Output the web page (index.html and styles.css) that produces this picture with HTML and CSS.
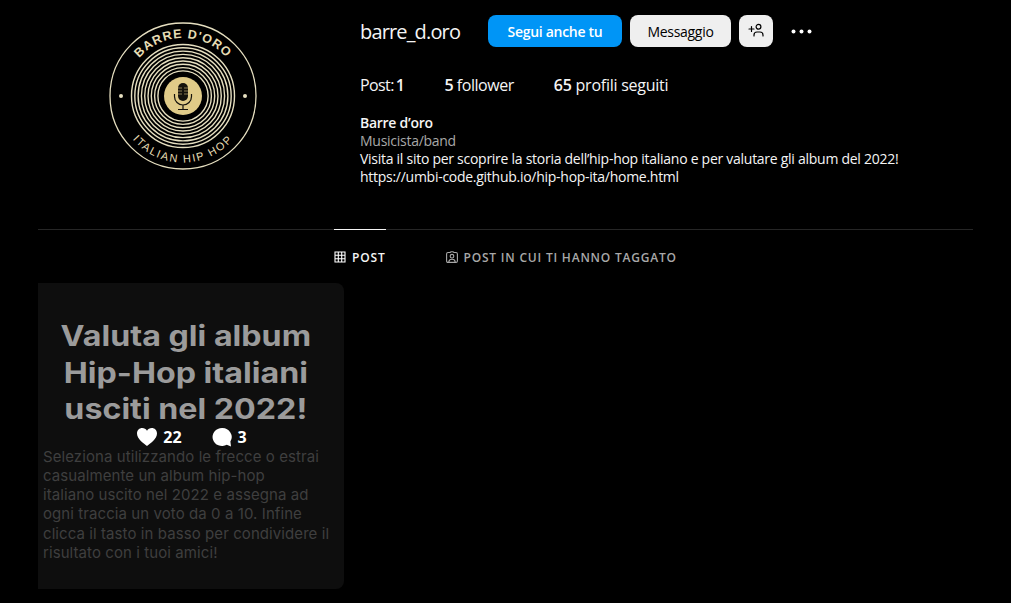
FILE: index.html
```html
<!DOCTYPE html>
<html lang="it">
<head>
  <meta charset="utf-8">
  <title>barre_d.oro</title>
  <link rel="stylesheet" href="styles.css">
</head>
<body>
<div class="page">
  <header class="profile">
    <div class="avatar-col">
      <svg class="avatar" width="148" height="148" viewBox="0 0 148 148">
        <defs>
          <path id="arc-top" d="M 16 74 A 58 58 0 0 1 132 74"/>
          <path id="arc-bottom" d="M 7.500 74 A 66.500 66.500 0 0 0 140.500 74"/>
        </defs>
        <circle class="line" cx="74" cy="74" r="73" stroke-width="1.3"/>
        <circle class="line" cx="74" cy="74" r="51.500" stroke-width="1.4"/>
        <circle class="line" cx="74" cy="74" r="48.200" stroke-width="1.4"/>
        <circle class="line" cx="74" cy="74" r="44.900" stroke-width="1.4"/>
        <circle class="line" cx="74" cy="74" r="41.600" stroke-width="1.4"/>
        <circle class="line" cx="74" cy="74" r="38.300" stroke-width="1.4"/>
        <circle class="line" cx="74" cy="74" r="35" stroke-width="1.4"/>
        <circle class="line" cx="74" cy="74" r="31.700" stroke-width="1.4"/>
        <circle class="line" cx="74" cy="74" r="28.400" stroke-width="1.4"/>
        <circle class="line" cx="74" cy="74" r="25.100" stroke-width="1.4"/>
        <circle class="label" cx="74" cy="74" r="19"/>
        <circle class="dot" cx="12" cy="74" r="2"/>
        <circle class="dot" cx="136" cy="74" r="2"/>
        <rect class="mic" x="69" y="61" width="10" height="18" rx="5"/>
        <path class="mic-line" d="M 65.500 72 V 74.500 A 8.500 8.500 0 0 0 82.500 74.500 V 72 M 74 83 V 87 M 69 87.500 H 79"/>
        <path class="mic-gap" d="M 69 66 H 73 M 69 69 H 73 M 69 72 H 73 M 75 66 H 79 M 75 69 H 79 M 75 72 H 79"/>
        <text class="logo-top"><textPath href="#arc-top" startOffset="50%">BARRE D'ORO</textPath></text>
        <text class="logo-bottom"><textPath href="#arc-bottom" startOffset="50%">ITALIAN HIP HOP</textPath></text>
      </svg>
    </div>
    <section class="info">
      <div class="top-row">
        <h2 class="username">barre_d.oro</h2>
        <button class="btn btn-blue">Segui anche tu</button>
        <button class="btn btn-grey">Messaggio</button>
        <button class="btn btn-grey btn-icon">
          <svg width="16" height="16" viewBox="0 0 16 16" fill="none" stroke="#000" stroke-width="1.200" stroke-linecap="round">
            <circle cx="10.500" cy="3.800" r="2.400"/>
            <path d="M 6 13 V 12 A 3 3 0 0 1 9 9 H 12 A 3 3 0 0 1 15 12 V 13"/>
            <path d="M 1 6 H 6 M 3.500 3.500 V 8.500"/>
          </svg>
        </button>
        <button class="more">
          <svg width="21" height="5" viewBox="0 0 21 5" fill="#fff">
            <circle cx="2.500" cy="2.500" r="2"/>
            <circle cx="10.500" cy="2.500" r="2"/>
            <circle cx="18.500" cy="2.500" r="2"/>
          </svg>
        </button>
      </div>
      <ul class="stats">
        <li class="stat-posts">Post: <b>1</b></li>
        <li class="stat-followers"><b>5</b> follower</li>
        <li><b>65</b> profili seguiti</li>
      </ul>
      <div class="bio">
        <div class="bio-name">Barre d’oro</div>
        <div class="bio-cat">Musicista/band</div>
        <div>Visita il sito per scoprire la storia dell’hip-hop italiano e per valutare gli album del 2022!</div>
        <div>https://umbi-code.github.io/hip-hop-ita/home.html</div>
      </div>
    </section>
  </header>

  <nav class="tabs">
    <a class="tab active">
      <svg width="12" height="12" viewBox="0 0 12 12" fill="none" stroke="#fff" stroke-width="1.100">
        <path d="M 1 1 H 11 V 11 H 1 Z M 4.300 1 V 11 M 7.700 1 V 11 M 1 4.300 H 11 M 1 7.700 H 11"/>
      </svg>
      POST
    </a>
    <a class="tab">
      <svg width="12" height="12" viewBox="0 0 12 12" fill="none" stroke="#a8a8a8" stroke-width="1.100">
        <path d="M 4 1.500 L 5 0.700 H 7 L 8 1.500 H 10 Q 11.400 1.500 11.400 3 V 10 Q 11.400 11.400 10 11.400 H 2 Q 0.600 11.400 0.600 10 V 3 Q 0.600 1.500 2 1.500 Z"/>
        <circle cx="6" cy="5.200" r="1.800"/>
        <path d="M 2.800 11 Q 3 8.300 6 8.300 Q 9 8.300 9.200 11"/>
      </svg>
      POST IN CUI TI HANNO TAGGATO
    </a>
  </nav>

  <main class="grid">
    <article class="tile">
      <h1 class="tile-title">Valuta gli album<br>Hip-Hop italiani<br>usciti nel 2022!</h1>
      <p class="tile-text">Seleziona utilizzando le frecce o estrai<br>casualmente un album hip-hop<br>italiano uscito nel 2022 e assegna ad<br>ogni traccia un voto da 0 a 10. Infine<br>clicca il tasto in basso per condividere il<br>risultato con i tuoi amici!</p>
      <div class="tile-hover">
        <span class="count">
          <svg width="20" height="18" viewBox="0 0 20 18" fill="#fff">
            <path d="M 10 18 C 7 15.500 0 11 0 5.500 C 0 2.200 2.400 0 5.200 0 C 7.300 0 9 1 10 2.800 C 11 1 12.700 0 14.800 0 C 17.600 0 20 2.200 20 5.500 C 20 11 13 15.500 10 18 Z"/>
          </svg>
          22
        </span>
        <span class="count">
          <svg width="20" height="19" viewBox="0 0 20 19" fill="#fff">
            <path d="M 10 0 A 9.500 9 0 1 0 14.800 16.800 L 19 18.500 L 18.400 13.500 A 9.500 9 0 0 0 10 0 Z"/>
          </svg>
          3
        </span>
      </div>
    </article>
  </main>
</div>
</body>
</html>
```
FILE: styles.css
```css
/* page */
* {box-sizing: border-box;}

body {
  margin: 0;
  background-color: #000;
  color: #f5f5f5;
  font-family: "Open Sans", "Noto Sans", Arial, sans-serif;
  overflow: hidden;
}

.page {
  padding: 0 38px;
}

/* profile header */
.profile {
  display: flex;
  height: 230px;
  border-bottom: 1px solid #262626;
}

.avatar-col {
  width: 322px;
  padding: 22px 32px 0 0;
  display: flex;
  justify-content: center;
  align-items: flex-start;
}

.line {
  fill: none;
  stroke: #e6dfc0;
}

.label {fill: #e0cb88;}
.dot {fill: #e6dfc0;}
.mic {fill: #14120c;}

.mic-line {
  fill: none;
  stroke: #14120c;
  stroke-width: 1.2;
}

.mic-gap {
  fill: none;
  stroke: #e0cb88;
  stroke-width: 0.6;
}

.logo-top, .logo-bottom {
  fill: #e6dcb4;
  text-anchor: middle;
  font-family: "Liberation Sans", Arial, sans-serif;
}

.logo-top {
  font-size: 12.5px;
  font-weight: bold;
  letter-spacing: 1px;
}

.logo-bottom {
  font-size: 11px;
  letter-spacing: 1.7px;
}

.info {
  flex: 1;
  padding-top: 15px;
}

.top-row {
  display: flex;
  align-items: center;
  height: 32px;
}

.username {
  margin: 0 28px 0 0;
  font-size: 20px;
  font-weight: 400;
  width: 100px;
  white-space: nowrap;
  letter-spacing: -0.85px;
}

.btn {
  height: 32px;
  border: 0;
  border-radius: 8px;
  font-family: inherit;
  font-size: 14px;
  font-weight: 600;
  margin-right: 8px;
  padding: 0;
  letter-spacing: -0.3px;
}

.btn-blue {
  width: 134px;
  background-color: #0095f6;
  color: #fff;
}

.btn-grey {
  width: 101px;
  background-color: #efefef;
  color: #000;
  font-weight: 400;
}

.btn-icon {
  width: 34px;
  display: flex;
  align-items: center;
  justify-content: center;
}

.more {
  margin-left: 10px;
  padding: 0;
  border: 0;
  background: none;
  display: flex;
}

.stats {
  display: flex;
  gap: 40px;
  margin: 26px 0 0;
  padding: 0;
  list-style: none;
  font-size: 16px;
  line-height: 24px;
  letter-spacing: -0.25px;
}

.stats b {font-weight: 600;}

.stat-posts {
  letter-spacing: -0.6px;
  word-spacing: -1.5px;
}

.stat-followers {letter-spacing: -0.45px;}

.bio {
  margin-top: 17px;
  font-size: 14px;
  line-height: 18px;
  letter-spacing: -0.27px;
  color: #f5f5f5;
}

.bio-name {font-weight: 600;}
.bio-cat {color: #a8a8a8;}

/* tabs */
.tabs {
  display: flex;
  justify-content: center;
  gap: 60px;
  height: 53px;
}

.tab {
  display: flex;
  align-items: center;
  gap: 6px;
  height: 53px;
  margin-top: -1px;
  padding-top: 2px;
  border-top: 1px solid transparent;
  color: #a8a8a8;
  font-size: 12px;
  font-weight: 600;
  letter-spacing: 0.8px;
}

.tab.active {
  border-top-color: #f5f5f5;
  color: #f5f5f5;
}

/* posts */
.tile {
  position: relative;
  width: 306px;
  height: 306px;
  background-color: #0e0e0e;
  border-radius: 0 8px 8px 0;
  font-family: Inter, "Open Sans", sans-serif;
}

.tile-title {
  margin: 0 0 19px;
  padding: 35px 9px 0 0;
  font-size: 28px;
  line-height: 36.500px;
  font-weight: 700;
  text-align: center;
  color: #9b9b9b;
  transform: scaleX(1.15);
}

.tile-text {
  margin: 0;
  padding-left: 5px;
  font-size: 15px;
  line-height: 19.300px;
  letter-spacing: 0.08px;
  color: #3f3f3f;
  white-space: nowrap;
}

.tile-hover {
  position: absolute;
  top: 0;
  left: 0;
  right: 0;
  bottom: 0;
  padding: 2px 0 0 2px;
  display: flex;
  align-items: center;
  justify-content: center;
  gap: 30px;
  font-family: "Open Sans", sans-serif;
}

.count {
  display: flex;
  align-items: center;
  gap: 6px;
  color: #fff;
  font-size: 16px;
  font-weight: 700;
}
```
